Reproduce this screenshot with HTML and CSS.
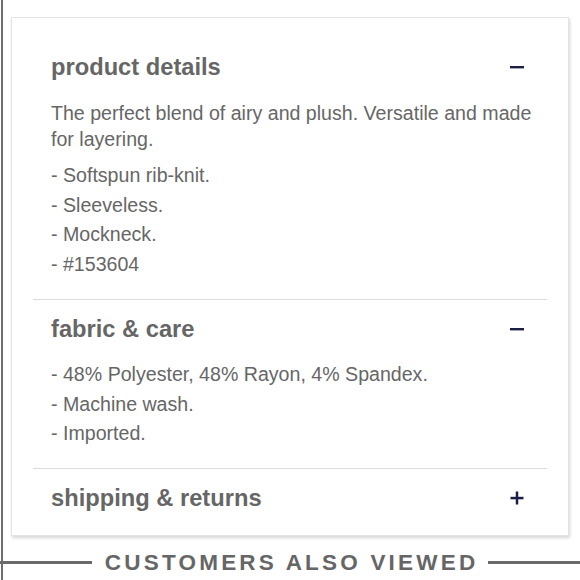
FILE: index.html
```html
<!DOCTYPE html>
<html>
<head>
<meta charset="utf-8">
<link rel="stylesheet" href="styles.css">
</head>
<body>
<div class="page">
  <div class="card">
    <section class="acc first">
      <div class="acc-head">
        <h2 class="acc-title">product details</h2>
        <svg class="icon" width="16" height="16" viewBox="0 0 16 16"><rect x="1" y="7" width="14" height="2.4" fill="#1c1f45"/></svg>
      </div>
      <p class="desc">The perfect blend of airy and plush. Versatile and made for layering.</p>
      <ul class="list">
        <li>- Softspun rib-knit.</li>
        <li>- Sleeveless.</li>
        <li>- Mockneck.</li>
        <li>- #153604</li>
      </ul>
    </section>
    <section class="acc mid">
      <div class="acc-head">
        <h2 class="acc-title">fabric &amp; care</h2>
        <svg class="icon" width="16" height="16" viewBox="0 0 16 16"><rect x="1" y="7" width="14" height="2.4" fill="#1c1f45"/></svg>
      </div>
      <ul class="list list-b">
        <li>- 48% Polyester, 48% Rayon, 4% Spandex.</li>
        <li>- Machine wash.</li>
        <li>- Imported.</li>
      </ul>
    </section>
    <section class="acc last">
      <div class="acc-head">
        <h2 class="acc-title">shipping &amp; returns</h2>
        <svg class="icon" width="16" height="16" viewBox="0 0 16 16"><rect x="1.5" y="6.8" width="13" height="2.5" fill="#1c1f45"/><rect x="6.75" y="1.5" width="2.5" height="13" fill="#1c1f45"/></svg>
      </div>
    </section>
  </div>
  <div class="also">
    <span class="also-line"></span>
    <span class="also-text">CUSTOMERS ALSO VIEWED</span>
    <span class="also-line"></span>
  </div>
</div>
</body>
</html>
```

FILE: styles.css
```css
html, body {
  margin: 0;
  padding: 0;
  background: #ffffff;
}
body {
  font-family: "Liberation Sans", Arial, Helvetica, sans-serif;
  color: #666666;
  width: 580px;
  height: 580px;
  overflow: hidden;
}
.page {
  margin-left: 1px;
  border-left: 2px solid #6e6e6e;
  height: 580px;
  padding-top: 17px;
  box-sizing: border-box;
}
.card {
  margin-left: 8px;
  width: 558px;
  box-sizing: border-box;
  border: 1px solid #e4e4e4;
  box-shadow: 1px 2px 3px rgba(0, 0, 0, 0.16);
  background: #fff;
  padding: 0 21px;
}
.acc {
  padding: 15px 10px 19px 18px;
  border-bottom: 1px solid #dcdcdc;
}
.acc.first {
  padding-top: 35px;
  padding-bottom: 20px;
}
.acc.last {
  border-bottom: none;
  padding-bottom: 23px;
}
.acc-head {
  display: flex;
  align-items: center;
  justify-content: space-between;
  height: 28px;
}
.acc-title {
  margin: 0;
  font-size: 23.7px;
  line-height: 28px;
  font-weight: bold;
  color: #666666;
}
.icon {
  display: block;
  margin-right: 12px;
  margin-top: 0;
}
.desc {
  margin: 19px 0 0 0;
  font-size: 19.6px;
  line-height: 26px;
}
.list {
  list-style: none;
  margin: 9px 0 0 0;
  padding: 0;
  font-size: 19.6px;
  line-height: 29.5px;
}
.list-b {
  margin-top: 17px;
}
.also {
  margin-left: -3px;
  width: 580px;
  margin-top: 14px;
  display: flex;
  align-items: center;
  gap: 13px;
}
.also-line {
  flex: 1;
  height: 3px;
  background: #6a6a6a;
}
.also-text {
  font-size: 22.5px;
  line-height: 26px;
  font-weight: bold;
  letter-spacing: 3.2px;
  margin-right: -3.2px;
  color: #666666;
}
```
